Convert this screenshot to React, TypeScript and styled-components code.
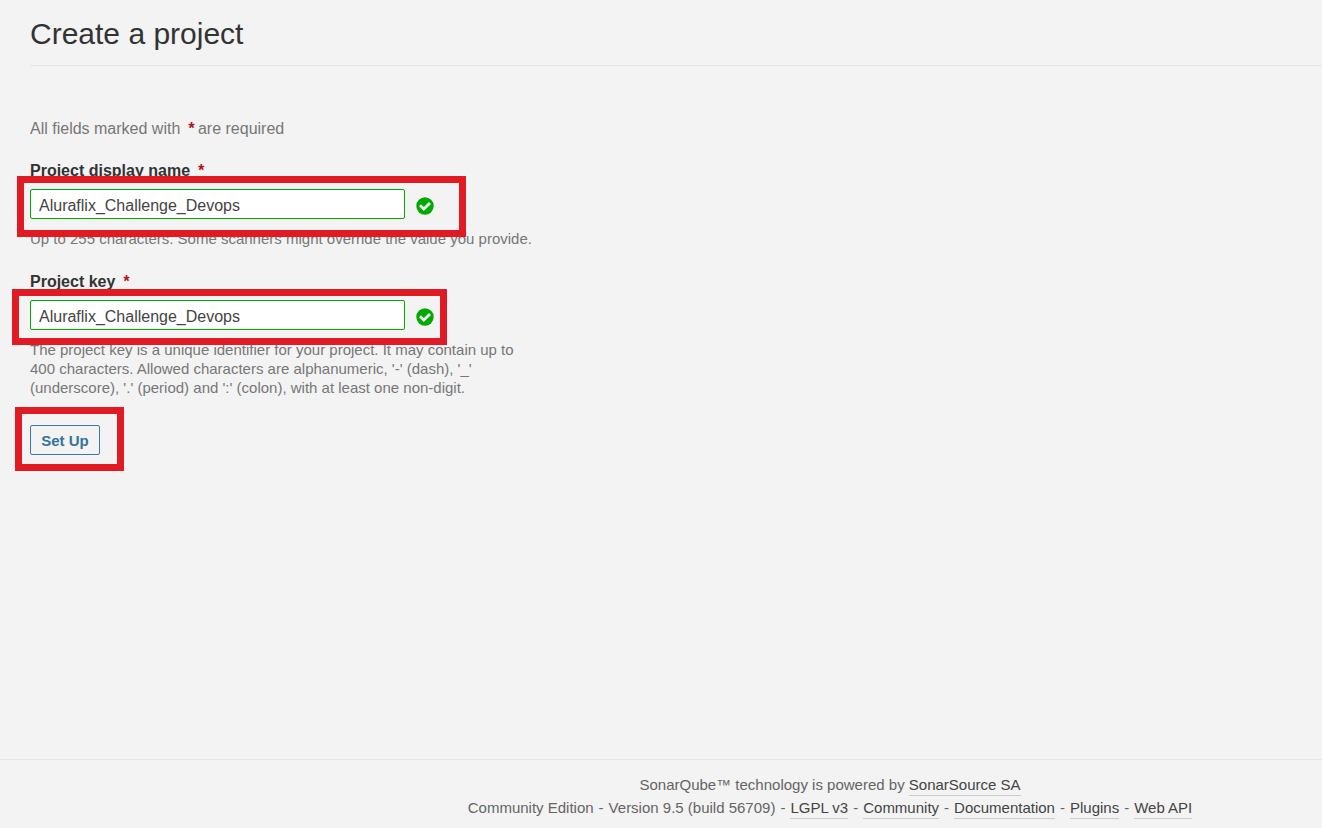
import React from "react";
import styled, { createGlobalStyle } from "styled-components";

const GlobalStyle = createGlobalStyle`
  *, *::before, *::after { box-sizing: border-box; }
  html, body { margin: 0; padding: 0; background: #f3f3f3; }
  body {
    font-family: "Liberation Sans", Arial, sans-serif;
    font-size: 16px;
    line-height: 20px;
    color: #333;
  }
`;

const Page = styled.div`
  display: flex;
  flex-direction: column;
  min-height: 100vh;
`;

const Main = styled.main`
  flex: 1;
  padding-left: 30px;
`;

const Header = styled.header`
  padding: 16px 0 14px;
  border-bottom: 1px solid #e6e6e6;
`;

const Title = styled.h1`
  margin: 0;
  font-size: 30px;
  line-height: 35px;
  font-weight: 400;
`;

const Form = styled.form`
  display: flex;
  flex-direction: column;
  align-items: flex-start;
  padding-top: 53px;
`;

const RequiredNote = styled.p`
  margin: 0 0 22px;
  color: #777;
`;

const Star = styled.em`
  margin: 0 4px 0 3px;
  color: #b4101c;
  font-weight: 700;
`;

const Field = styled.div<{ $last?: boolean }>`
  max-width: 510px;
  margin-bottom: ${(p) => (p.$last ? 28 : 24)}px;
`;

const Label = styled.label`
  display: block;
  margin-bottom: 8px;
  font-weight: 700;
`;

const Marked = styled.div`
  position: relative;
  width: max-content;
`;

const Frame = styled.span<{ $top: number; $right: number; $bottom: number; $left: number }>`
  position: absolute;
  top: -${(p) => p.$top}px;
  right: -${(p) => p.$right}px;
  bottom: -${(p) => p.$bottom}px;
  left: -${(p) => p.$left}px;
  z-index: 1;
  border: 7px solid #e01b24;
  pointer-events: none;
`;

const InputRow = styled.div`
  display: flex;
  align-items: center;
  gap: 11px;
`;

const Input = styled.input`
  width: 375px;
  height: 30px;
  padding: 4px 8px 0;
  border: 1px solid #0a0;
  border-radius: 2px;
  background: #fff;
  color: #444;
  font: inherit;
  outline: none;
`;

const Valid = styled.svg`
  width: 18px;
  height: 18px;
  margin-top: 4px;
`;

const Help = styled.p`
  margin: 10px 0 0;
  font-size: 15px;
  line-height: 19px;
  color: #777;
`;

const SetUpButton = styled.button`
  display: block;
  height: 30px;
  width: 70px;
  padding: 2px 0 0;
  border: 1px solid #3a7aa5;
  border-radius: 2px;
  background: transparent;
  color: #3474a0;
  font: inherit;
  font-size: 15px;
  font-weight: 700;
`;

const Footer = styled.footer`
  padding: 13px 0 9px 338px;
  border-top: 1px solid #e6e6e6;
  font-size: 15px;
  line-height: 23px;
  color: #656565;
  text-align: center;
  white-space: nowrap;
`;

const Separator = styled.span`
  margin: 0 5px;
`;

const FooterLink = styled.a`
  padding-bottom: 2px;
  border-bottom: 1px solid #cacaca;
  color: #444;
  text-decoration: none;
`;

const links = ["LGPL v3", "Community", "Documentation", "Plugins", "Web API"];

function ValidIcon() {
  return (
    <Valid viewBox="0 0 18 18" role="img" aria-label="Valid">
      <circle cx="9" cy="9" r="8.7" fill="#0a0" />
      <path d="M4 8.3 7.8 12.1l6.2-6.2" fill="none" stroke="#f3f3f3" strokeWidth="2.8" />
    </Valid>
  );
}

export default function App() {
  return (
    <Page>
      <GlobalStyle />
      <Main>
        <Header>
          <Title>Create a project</Title>
        </Header>
        <Form onSubmit={(e) => e.preventDefault()}>
          <RequiredNote>
            All fields marked with <Star>*</Star>are required
          </RequiredNote>
          <Field>
            <Label htmlFor="project-name">
              Project display name <Star>*</Star>
            </Label>
            <Marked>
              <InputRow>
                <Input id="project-name" type="text" defaultValue="Aluraflix_Challenge_Devops" required />
                <ValidIcon />
              </InputRow>
              <Frame $top={13} $right={32} $bottom={18} $left={13} />
            </Marked>
            <Help>Up to 255 characters. Some scanners might override the value you provide.</Help>
          </Field>
          <Field $last>
            <Label htmlFor="project-key">
              Project key <Star>*</Star>
            </Label>
            <Marked>
              <InputRow>
                <Input id="project-key" type="text" defaultValue="Aluraflix_Challenge_Devops" required />
                <ValidIcon />
              </InputRow>
              <Frame $top={11} $right={13} $bottom={15} $left={18} />
            </Marked>
            <Help>
              The project key is a unique identifier for your project. It may contain up to 400 characters. Allowed
              characters are alphanumeric, '-' (dash), '_' (underscore), '.' (period) and ':' (colon), with at least
              one non-digit.
            </Help>
          </Field>
          <Marked>
            <SetUpButton type="submit">Set Up</SetUpButton>
            <Frame $top={18} $right={24} $bottom={16} $left={15} />
          </Marked>
        </Form>
      </Main>
      <Footer>
        <div>
          SonarQube™ technology is powered by <FooterLink href="#sonarsource">SonarSource SA</FooterLink>
        </div>
        <div>
          Community Edition<Separator>-</Separator>Version 9.5 (build 56709)
          {links.map((name) => (
            <React.Fragment key={name}>
              <Separator>-</Separator>
              <FooterLink href="#footer">{name}</FooterLink>
            </React.Fragment>
          ))}
        </div>
      </Footer>
    </Page>
  );
}
